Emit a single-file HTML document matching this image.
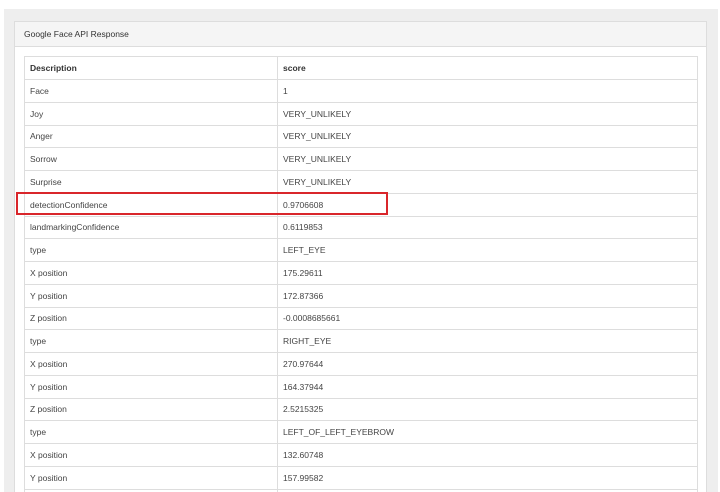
<!DOCTYPE html><html style="overflow:hidden;height:492px"><head><style>
body{margin:0;width:720px;height:492px;overflow:hidden;background:#fff;font-family:"Liberation Sans",Arial,sans-serif;font-size:8.5px;color:#444}
.wrap{position:relative;width:720px;height:492px;overflow:hidden}
.bg{position:absolute;left:4px;top:9px;width:714px;height:483px;background:#eeeeee}
.panel{position:absolute;left:14px;top:21px;width:693px;height:471px;background:#fff;border:1px solid #ddd;border-bottom:none;box-sizing:border-box;overflow:hidden}
.ph{height:24px;background:#f5f5f5;border-bottom:1px solid #ddd;line-height:24px;padding-left:9px;font-size:8.5px;color:#333}
table{position:absolute;left:9px;top:34px;width:674px;border-collapse:collapse}
td{border:1px solid #ddd;height:22.76px;padding:0 0 0 5px;box-sizing:border-box}
td:first-child{width:253px}
tr.h td{font-weight:bold;height:23px;color:#333}
.red{position:absolute;left:16px;top:192px;width:372px;height:23px;border:2px solid #d9262b;box-sizing:border-box}
</style></head><body><div class="wrap">
<div class="bg"></div>
<div class="panel"><div class="ph">Google Face API Response</div>
<table>
<tr class="h"><td>Description</td><td>score</td></tr>
<tr><td>Face</td><td>1</td></tr>
<tr><td>Joy</td><td>VERY_UNLIKELY</td></tr>
<tr><td>Anger</td><td>VERY_UNLIKELY</td></tr>
<tr><td>Sorrow</td><td>VERY_UNLIKELY</td></tr>
<tr><td>Surprise</td><td>VERY_UNLIKELY</td></tr>
<tr><td>detectionConfidence</td><td>0.9706608</td></tr>
<tr><td>landmarkingConfidence</td><td>0.6119853</td></tr>
<tr><td>type</td><td>LEFT_EYE</td></tr>
<tr><td>X position</td><td>175.29611</td></tr>
<tr><td>Y position</td><td>172.87366</td></tr>
<tr><td>Z position</td><td>-0.0008685661</td></tr>
<tr><td>type</td><td>RIGHT_EYE</td></tr>
<tr><td>X position</td><td>270.97644</td></tr>
<tr><td>Y position</td><td>164.37944</td></tr>
<tr><td>Z position</td><td>2.5215325</td></tr>
<tr><td>type</td><td>LEFT_OF_LEFT_EYEBROW</td></tr>
<tr><td>X position</td><td>132.60748</td></tr>
<tr><td>Y position</td><td>157.99582</td></tr>
<tr><td>&nbsp;</td><td>&nbsp;</td></tr>
</table></div>
<div class="red"></div>
</div></body></html>
